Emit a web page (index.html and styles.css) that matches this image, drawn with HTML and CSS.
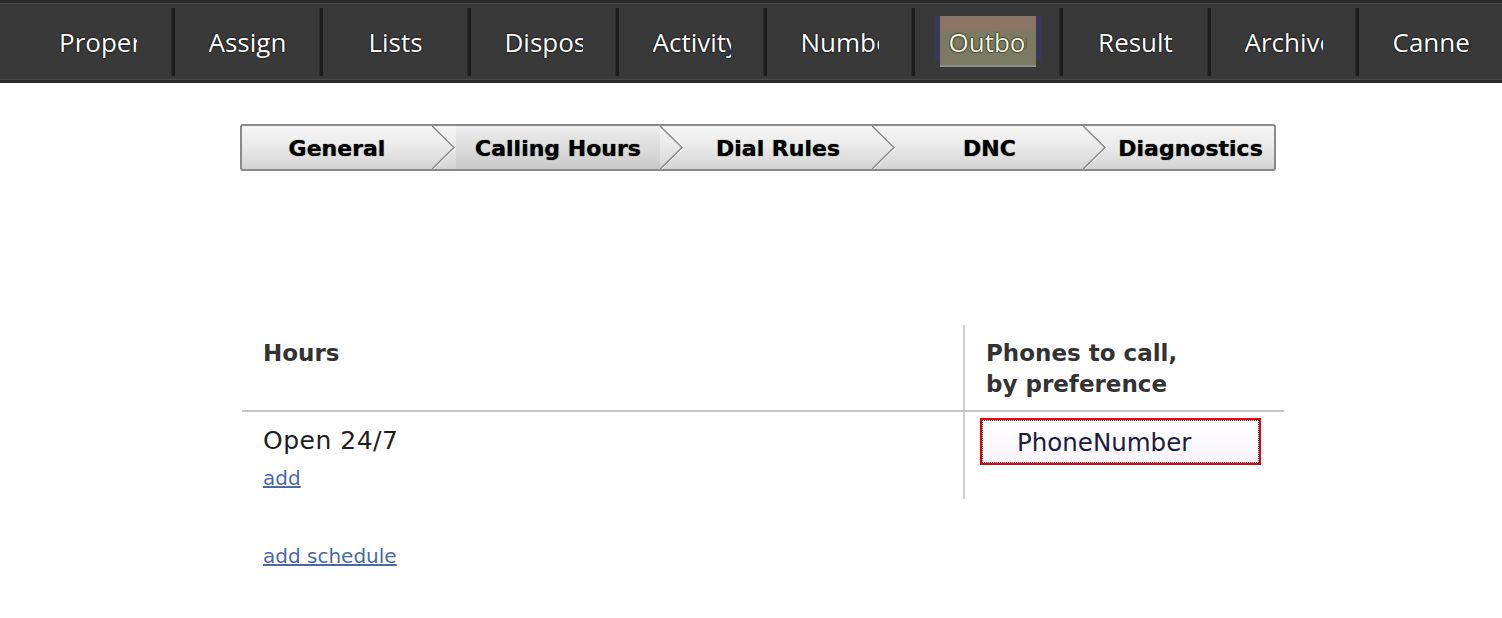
FILE: index.html
```html
<!DOCTYPE html>
<html lang="en">
<head>
<meta charset="UTF-8" />
<title>Outbound - Calling Hours</title>
<link rel="stylesheet" href="styles.css">
</head>
<body>

<nav class="topnav">
  <ul class="topnav-list">
    <li class="topnav-item"><a class="topnav-link" href="#"><span>Properties</span></a></li>
    <li class="topnav-item"><a class="topnav-link" href="#"><span>Assignments</span></a></li>
    <li class="topnav-item"><a class="topnav-link" href="#"><span>Lists</span></a></li>
    <li class="topnav-item"><a class="topnav-link" href="#"><span>Dispositions</span></a></li>
    <li class="topnav-item"><a class="topnav-link" href="#"><span>Activity</span></a></li>
    <li class="topnav-item"><a class="topnav-link" href="#"><span>Numbers</span></a></li>
    <li class="topnav-item"><a class="topnav-link active" href="#"><span>Outbound</span></a></li>
    <li class="topnav-item"><a class="topnav-link" href="#"><span>Result</span></a></li>
    <li class="topnav-item"><a class="topnav-link" href="#"><span>Archive</span></a></li>
    <li class="topnav-item"><a class="topnav-link" href="#"><span>Canned</span></a></li>
  </ul>
</nav>

<div class="steps">
  <div class="step step-general">General</div>
  <svg class="step-sep" viewBox="0 0 24 43" preserveAspectRatio="none"><polyline points="0,0 22,21.5 0,43" fill="none" stroke="#8c8c8c" stroke-width="1.5"/><polyline points="2,0 24,21.5 2,43" fill="none" stroke="#fafafa" stroke-width="1"/></svg>
  <div class="step step-hours current">Calling Hours</div>
  <svg class="step-sep" viewBox="0 0 24 43" preserveAspectRatio="none"><polyline points="0,0 22,21.5 0,43" fill="none" stroke="#8c8c8c" stroke-width="1.5"/><polyline points="2,0 24,21.5 2,43" fill="none" stroke="#fafafa" stroke-width="1"/></svg>
  <div class="step step-rules">Dial Rules</div>
  <svg class="step-sep" viewBox="0 0 24 43" preserveAspectRatio="none"><polyline points="0,0 22,21.5 0,43" fill="none" stroke="#8c8c8c" stroke-width="1.5"/><polyline points="2,0 24,21.5 2,43" fill="none" stroke="#fafafa" stroke-width="1"/></svg>
  <div class="step step-dnc">DNC</div>
  <svg class="step-sep" viewBox="0 0 24 43" preserveAspectRatio="none"><polyline points="0,0 22,21.5 0,43" fill="none" stroke="#8c8c8c" stroke-width="1.5"/><polyline points="2,0 24,21.5 2,43" fill="none" stroke="#fafafa" stroke-width="1"/></svg>
  <div class="step step-diag">Diagnostics</div>
</div>

<div class="schedule">
  <div class="cell head">Hours</div>
  <div class="cell head right">Phones to call,<br />by preference</div>
  <div class="cell body">
    <div class="hours-text">Open 24/7</div>
    <a class="link add-link" href="#">add</a>
  </div>
  <div class="cell body right">
    <div class="phone-box">PhoneNumber</div>
  </div>
</div>

<a class="link schedule-link" href="#">add schedule</a>

</body>
</html>
```

FILE: styles.css
```css
body {
  margin: 0;
  padding: 0;
  background: #fff;
  font-family: "DejaVu Sans", Verdana, sans-serif;
  color: #222;
}
.topnav {
  height: 77px;
  background: #393939;
  border-top: 3px solid #2a2a2a;
  border-bottom: 3px solid #2a2a2a;
  box-shadow: inset 0 1px 0 #4a4a4a, inset 0 -1px 0 #4a4a4a;
}
.topnav-list {
  display: flex;
  align-items: center;
  height: 100%;
  margin: 0;
  padding: 0 0 0 24px;
  list-style: none;
}
.topnav-item {
  width: 148px;
  height: 68px;
  flex: none;
  display: flex;
  align-items: center;
  justify-content: center;
  box-sizing: border-box;
}
.topnav-item + .topnav-item {
  border-left: 3px solid #1c1c1c;
  box-shadow: -1px 0 0 #2c2c2c;
}
.topnav-link {
  display: block;
  padding: 6px 9px 4px;
  color: #fff;
  text-decoration: none;
  font-family: "Open Sans", sans-serif;
  font-size: 26px;
  line-height: 41px;
  text-shadow: 0 0 2px #000, 0 0 1px #000;
}
.topnav-link span {
  display: block;
  max-width: 78px;
  overflow: hidden;
  white-space: nowrap;
}
.topnav-link.active {
  color: #f7f7dc;
  background: linear-gradient(#8a7567 0, #8a7567 15px, #7b7a63 15px, #7b7a63 49px, #8e8e8e 49px);
  box-shadow: -8px -3px 0 -3px #3a3858, 8px -3px 0 -3px #3a3858;
}
.steps {
  display: flex;
  width: 1036px;
  height: 47px;
  box-sizing: border-box;
  margin: 41px 0 0 240px;
  border: 2px solid #8a8a8a;
  border-radius: 3px;
  background: linear-gradient(#f6f6f6, #ebebeb 45%, #d4d4d4);
}
.step {
  flex: none;
  text-align: center;
  font-weight: bold;
  font-size: 22px;
  line-height: 45px;
  color: #000;
  text-shadow: 0 0 1px #333;
}
.step.current {
  background: linear-gradient(#eeeeee, #dedede 45%, #c9c9c9);
}
.step-general { width: 190px; }
.step-hours { width: 204px; }
.step-rules { width: 188px; }
.step-dnc { width: 187px; }
.step-diag { width: 167px; }
.step-sep {
  flex: none;
  width: 24px;
  height: 43px;
}
.schedule {
  display: grid;
  grid-template-columns: 721px 321px;
  margin: 154px 0 0 242px;
}
.cell {
  box-sizing: border-box;
}
.cell.head {
  height: 87px;
  padding: 13px 21px 0;
  font-weight: bold;
  font-size: 23px;
  line-height: 31px;
  color: #333;
  border-bottom: 2px solid #c6c6c6;
}
.cell.right {
  border-left: 2px solid #cfcfcf;
}
.cell.body {
  height: 87px;
  padding: 12px 21px 0;
}
.cell.body.right {
  padding: 6px 0 0 15px;
}
.hours-text {
  font-size: 25px;
  line-height: 34px;
  letter-spacing: 0.5px;
  color: #1e1e1e;
}
.link {
  color: #4b6aa5;
  font-size: 20px;
  line-height: 26px;
  text-decoration: underline;
}
.add-link {
  display: inline-block;
  margin-top: 7px;
}
.phone-box {
  width: 281px;
  height: 47px;
  box-sizing: border-box;
  padding: 3px 0 0 35px;
  border: 2px solid #e4000e;
  outline: 1px dotted #553333;
  outline-offset: -3px;
  background: linear-gradient(#ffffff, #f7f3fb);
  font-size: 24.5px;
  line-height: 40px;
  color: #1c1c38;
}
.schedule-link {
  display: inline-block;
  margin: 44px 0 0 263px;
}
```
